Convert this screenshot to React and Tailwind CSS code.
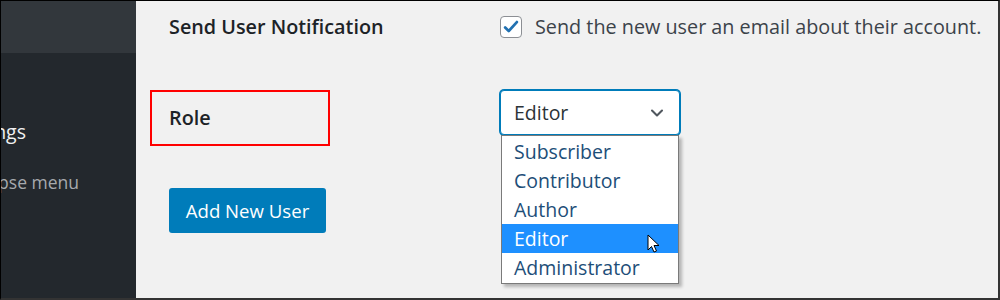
import { ChevronDown } from 'lucide-react';

const font = { fontFamily: '"Open Sans", "Noto Sans", sans-serif' };

function Sidebar() {
  return (
    <aside className="flex w-[135px] shrink-0 flex-col bg-[#23282d]">
      <div className="h-[52px] bg-[#32373c]" />
      <div className="mt-[64px] flex w-[25px] justify-end overflow-hidden whitespace-nowrap text-[19.5px] leading-[30px] text-[#f0f0f1]">Settings</div>
      <div className="mt-[22px] flex w-[78px] justify-end overflow-hidden whitespace-nowrap text-[17.5px] leading-[26px] text-[#a7aaad]">Collapse menu</div>
    </aside>
  );
}

function Checkbox() {
  return (
    <span className="flex h-[22px] w-[22px] items-center justify-center rounded-[4px] border border-[#8c8f94] bg-white">
      <svg viewBox="0 0 20 20" className="h-[18px] w-[18px]" aria-hidden="true">
        <path d="M3.5 10.5l4 4 9-10" fill="none" stroke="#2271b1" strokeWidth="3" strokeLinecap="round" strokeLinejoin="round" />
      </svg>
    </span>
  );
}

const roles = ['Subscriber', 'Contributor', 'Author', 'Editor', 'Administrator'];

function RoleSelect() {
  return (
    <div className="relative">
      <div className="flex h-[45px] w-[180px] items-center justify-between rounded-[4px] border border-[#007cba] bg-white pl-[13px] pr-[12px] text-[19.5px] text-[#2c3338] shadow-[0_0_0_1px_#007cba]">
        Editor
        <ChevronDown className="h-5 w-5 text-[#50575e]" strokeWidth={2.5} />
      </div>
      <ul className="absolute left-[1px] top-[45px] w-[178px] border border-[#7a7a7a] bg-white py-[1px] text-[19.5px] text-[#1d4e78] shadow-[3px_3px_3px_rgba(0,0,0,0.25)]">
        {roles.map(role => (
          <li
            key={role}
            className={`relative h-[29px] pl-[12px] leading-[29px] ${role === 'Editor' ? 'bg-[#1e90ff] text-white' : ''}`}
          >
            {role}
            {role === 'Editor' && (
              <svg viewBox="0 0 12 19" className="absolute left-[145px] top-[10px] h-[19px] w-[12px]" aria-hidden="true">
                <path d="M1 1v15l3.5-3.5 2.5 5.5 2.5-1-2.5-5.5h5z" fill="white" stroke="black" strokeWidth="1" strokeLinejoin="round" />
              </svg>
            )}
          </li>
        ))}
      </ul>
    </div>
  );
}

export default function App() {
  return (
    <div style={font} className="flex h-[300px] w-[1000px] overflow-hidden border-t border-l border-r-2 border-b-2 border-t-black border-l-black border-r-[#333] border-b-[#333]">
      <Sidebar />
      <main className="flex flex-1 flex-col bg-[#f1f1f1]">
        <div className="flex h-[52px] items-center pl-[33px]">
          <div className="w-[331px] text-[19.8px] font-semibold text-[#1d2327]">Send User Notification</div>
          <label className="flex items-center gap-[13px] text-[19.8px] text-[#3c434a]">
            <Checkbox />
            Send the new user an email about their account.
          </label>
        </div>
        <div className="mt-[37px] flex items-start pl-[14px]">
          <div className="flex h-[56px] w-[180px] items-center border-2 border-[#ff0000] pl-[17px] text-[19.8px] font-semibold text-[#1d2327]">Role</div>
          <div className="ml-[170px]">
            <RoleSelect />
          </div>
        </div>
        <div className="mt-[42px] pl-[33px]">
          <button type="button" className="h-[45px] w-[157px] rounded-[3px] bg-[#007cba] text-[18.6px] text-white">Add New User</button>
        </div>
      </main>
    </div>
  );
}
